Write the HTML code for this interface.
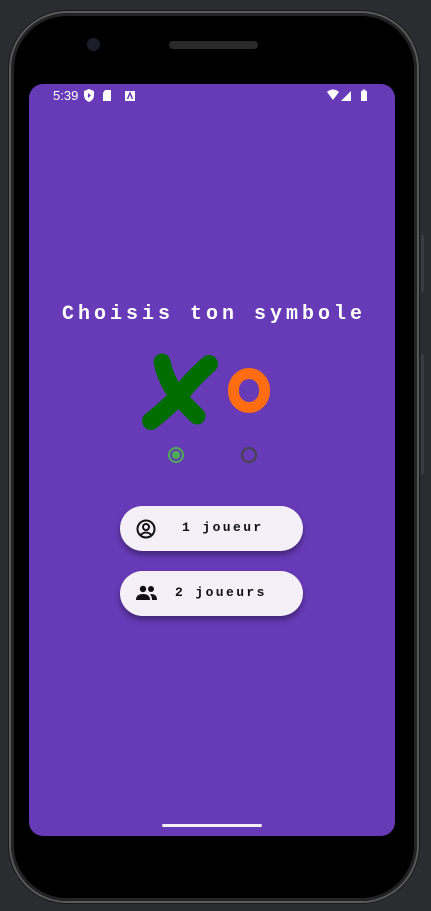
<!DOCTYPE html>
<html><head><meta charset="utf-8"><style>
html,body{margin:0;padding:0;width:431px;height:911px;background:#2b2c2f;overflow:hidden;font-family:"Liberation Sans",sans-serif}
.phone{position:absolute;left:9px;top:11px;width:410px;height:892px;border-radius:58px;background:#000;border:2px solid #5a5a5c;box-sizing:border-box;box-shadow:0 0 0 1px #1a1a1a,inset 0 0 0 3px #222}
.screen{position:absolute;left:29px;top:84px;width:366px;height:752px;border-radius:14px;background:#673ab7;overflow:hidden}
.cam{position:absolute;left:87px;top:38px;width:13px;height:13px;border-radius:50%;background:#1b1d2a}
.spk{position:absolute;left:169px;top:41px;width:89px;height:8px;border-radius:4px;background:#2a2a2a}
.btn1,.btn2{position:absolute;left:421px;width:3px;background:#3a3b3e;border-radius:1px}
.status{position:absolute;left:24px;top:4px;color:#fff;font-size:13px}
.title{position:absolute;left:0;width:366px;top:219px;text-align:center;color:#fff;font-family:"Liberation Mono",monospace;font-weight:bold;font-size:20px;letter-spacing:4px;text-indent:4px}
.pill{position:absolute;left:91px;width:183px;height:45px;border-radius:23px;background:#f5eff8;box-shadow:0 4px 6px rgba(0,0,0,0.35)}
.pill span{position:absolute;top:14px;font-family:"Liberation Mono",monospace;font-weight:bold;font-size:13px;letter-spacing:2.4px;color:#111}
.home{position:absolute;left:133px;top:740px;width:100px;height:3px;border-radius:2px;background:#f3eef8}
</style></head><body>
<div class="btn1" style="top:235px;height:57px"></div>
<div class="btn2" style="top:354px;height:120px"></div>
<div class="phone"></div>
<div class="cam"></div><div class="spk"></div>
<div class="screen">
  <div class="status">5:39</div>
  <svg style="position:absolute;left:54px;top:5px" width="60" height="13" viewBox="0 0 60 13">
    <path d="M1 2 L6 0 L11 2 L11 6 Q11 11 6 13 Q1 11 1 6Z" fill="#fff"/><path d="M5 4 L8 6.5 L5 9Z" fill="#673ab7"/>
    <path d="M22 1 L28 1 L28 12 L20 12 L20 4Z" fill="#fff"/>
    <rect x="42" y="2" width="10" height="10" fill="#fff"/><path d="M44.5 10 L47 4 L49.5 10" stroke="#673ab7" stroke-width="1.5" fill="none"/>
  </svg>
  <svg style="position:absolute;left:298px;top:5px" width="45" height="13" viewBox="0 0 45 13">
    <path d="M0 3 Q6 -2 12 3 L6 11Z" fill="#fff"/>
    <path d="M14 12 L24 2 L24 12Z" fill="#fff"/>
    <rect x="34" y="2" width="6" height="10" fill="#fff"/><rect x="35.5" y="0.5" width="3" height="2" fill="#fff"/>
  </svg>
  <div class="title">Choisis ton symbole</div>
  <svg style="position:absolute;left:110px;top:268px" width="80" height="80" viewBox="0 0 80 80">
    <path d="M23 10 Q28 34 46 52 L58 64" stroke="#006d00" stroke-width="17" stroke-linecap="round" fill="none"/>
    <path d="M70 12 Q50 30 42 42 Q26 58 12 69" stroke="#006d00" stroke-width="18" stroke-linecap="round" fill="none"/>
  </svg>
  <div style="position:absolute;left:199px;top:284px;width:20px;height:23px;border:11px solid #ff6d10;border-radius:50%/48%"></div>
  <svg style="position:absolute;left:138px;top:362px" width="100" height="18" viewBox="0 0 100 18">
    <circle cx="9" cy="9" r="7" fill="none" stroke="#4caf50" stroke-width="2"/><circle cx="9" cy="9" r="4" fill="#4caf50"/>
    <circle cx="82" cy="9" r="7" fill="none" stroke="#444" stroke-width="2"/>
  </svg>
  <div class="pill" style="top:422px">
    <svg style="position:absolute;left:16px;top:13px" width="20" height="20" viewBox="0 0 20 20"><circle cx="10" cy="10" r="8.5" fill="none" stroke="#111" stroke-width="2"/><circle cx="10" cy="8" r="3" fill="none" stroke="#111" stroke-width="2"/><path d="M4.5 16 Q10 11 15.5 16" fill="none" stroke="#111" stroke-width="2"/></svg>
    <span style="left:62px">1 joueur</span>
  </div>
  <div class="pill" style="top:487px">
    <svg style="position:absolute;left:16px;top:14px" width="22" height="16" viewBox="0 0 22 16"><circle cx="7" cy="4" r="3.2" fill="#111"/><circle cx="15" cy="4" r="3" fill="#111"/><path d="M0 15 Q0 9 7 9 Q14 9 14 15Z" fill="#111"/><path d="M15 9 Q21 9 21 15 L16 15 Q16 11 14 9.5Z" fill="#111"/></svg>
    <span style="left:55px">2 joueurs</span>
  </div>
  <div class="home"></div>
</div>
</body></html>
